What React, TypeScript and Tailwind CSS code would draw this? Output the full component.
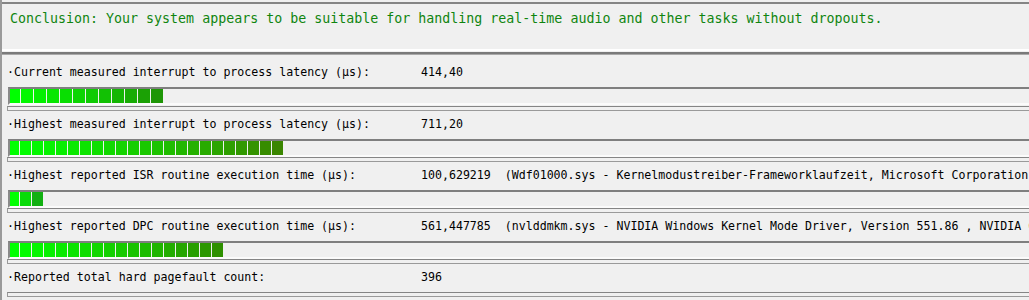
import React from "react";

type Bar = { first: number; seg: number; n: number; end: [number, number, number] };
type Row = { label: string; value: string; bar?: Bar };

const rows: Row[] = [
  {
    label: "·Current measured interrupt to process latency (µs):",
    value: "414,40",
    bar: { first: 10, seg: 12, n: 12, end: [30, 150, 6] },
  },
  {
    label: "·Highest measured interrupt to process latency (µs):",
    value: "711,20",
    bar: { first: 9, seg: 11, n: 23, end: [58, 134, 0] },
  },
  {
    label: "·Highest reported ISR routine execution time (µs):",
    value:
      "100,629219  (Wdf01000.sys - Kernelmodustreiber-Frameworklaufzeit, Microsoft Corporation)",
    bar: { first: 9, seg: 11, n: 3, end: [18, 176, 18] },
  },
  {
    label: "·Highest reported DPC routine execution time (µs):",
    value:
      "561,447785  (nvlddmkm.sys - NVIDIA Windows Kernel Mode Driver, Version 551.86 , NVIDIA Corporation)",
    bar: { first: 9, seg: 11, n: 18, end: [46, 144, 0] },
  },
  {
    label: "·Reported total hard pagefault count:",
    value: "396",
  },
];

function segColor(i: number, n: number, end: [number, number, number]) {
  const t = n <= 1 ? 1 : i / (n - 1);
  const e = Math.pow(t, 1.15);
  const r = Math.round(0 + (end[0] - 0) * e);
  const g = Math.round(255 + (end[1] - 255) * e);
  const b = Math.round(0 + (end[2] - 0) * e);
  return `rgb(${r},${g},${b})`;
}

function Segments({ bar }: { bar: Bar }) {
  const items = [];
  for (let i = 0; i < bar.n; i++) {
    items.push(
      <div
        key={i}
        className="h-full shrink-0"
        style={{ width: i === 0 ? bar.first : bar.seg, background: segColor(i, bar.n, bar.end) }}
      />
    );
  }
  return <div className="flex h-full gap-[1px]">{items}</div>;
}

export default function App() {
  return (
    <div
      className="w-[1029px] h-[300px] overflow-hidden bg-[#f0f0f0] border-l-2 border-[#9a9a9a]"
      style={{ fontFamily: '"DejaVu Sans Mono", "Liberation Mono", monospace' }}
    >
      <div className="mt-[2px] h-[49px] w-[1200px] border-t-2 border-b-2 border-t-[#858585] border-b-white pl-[8px] pt-[7px]">
        <div className="text-[13.3px] leading-[16px] text-[#0f850f] whitespace-pre">
          Conclusion: Your system appears to be suitable for handling real-time audio and other tasks without dropouts.
        </div>
      </div>
      <div className="mt-[1px] w-[1200px] border-t-2 border-[#7a7a7a]">
        <div className="border-t border-[#a9a9a9] pt-[4px]">
          {rows.map((row, idx) => (
            <div key={idx} className="pt-[5px]">
              <div className="flex h-[16px] items-center pl-[5px] text-[11.6px] leading-[16px] text-black whitespace-pre">
                <div className="w-[414px] shrink-0">{row.label}</div>
                <div>{row.value}</div>
              </div>
              {row.bar ? (
                <div className="mt-[7px] ml-[6px] h-[18px] border-t-2 border-l-2 border-b-2 border-t-[#7f7f7f] border-l-[#8a8a8a] border-b-[#fbfbfb]">
                  <Segments bar={row.bar} />
                </div>
              ) : (
                <div className="mt-[7px]" />
              )}
              <div
                className={
                  idx === 0
                    ? "mt-[1px] ml-[5px] h-[5px] border-t border-b border-l border-[#9a9a9a] border-t-[#858585]"
                    : "ml-[5px] h-[5px] border-t border-b border-l border-[#9a9a9a] border-t-[#858585]"
                }
              />
            </div>
          ))}
        </div>
      </div>
    </div>
  );
}
